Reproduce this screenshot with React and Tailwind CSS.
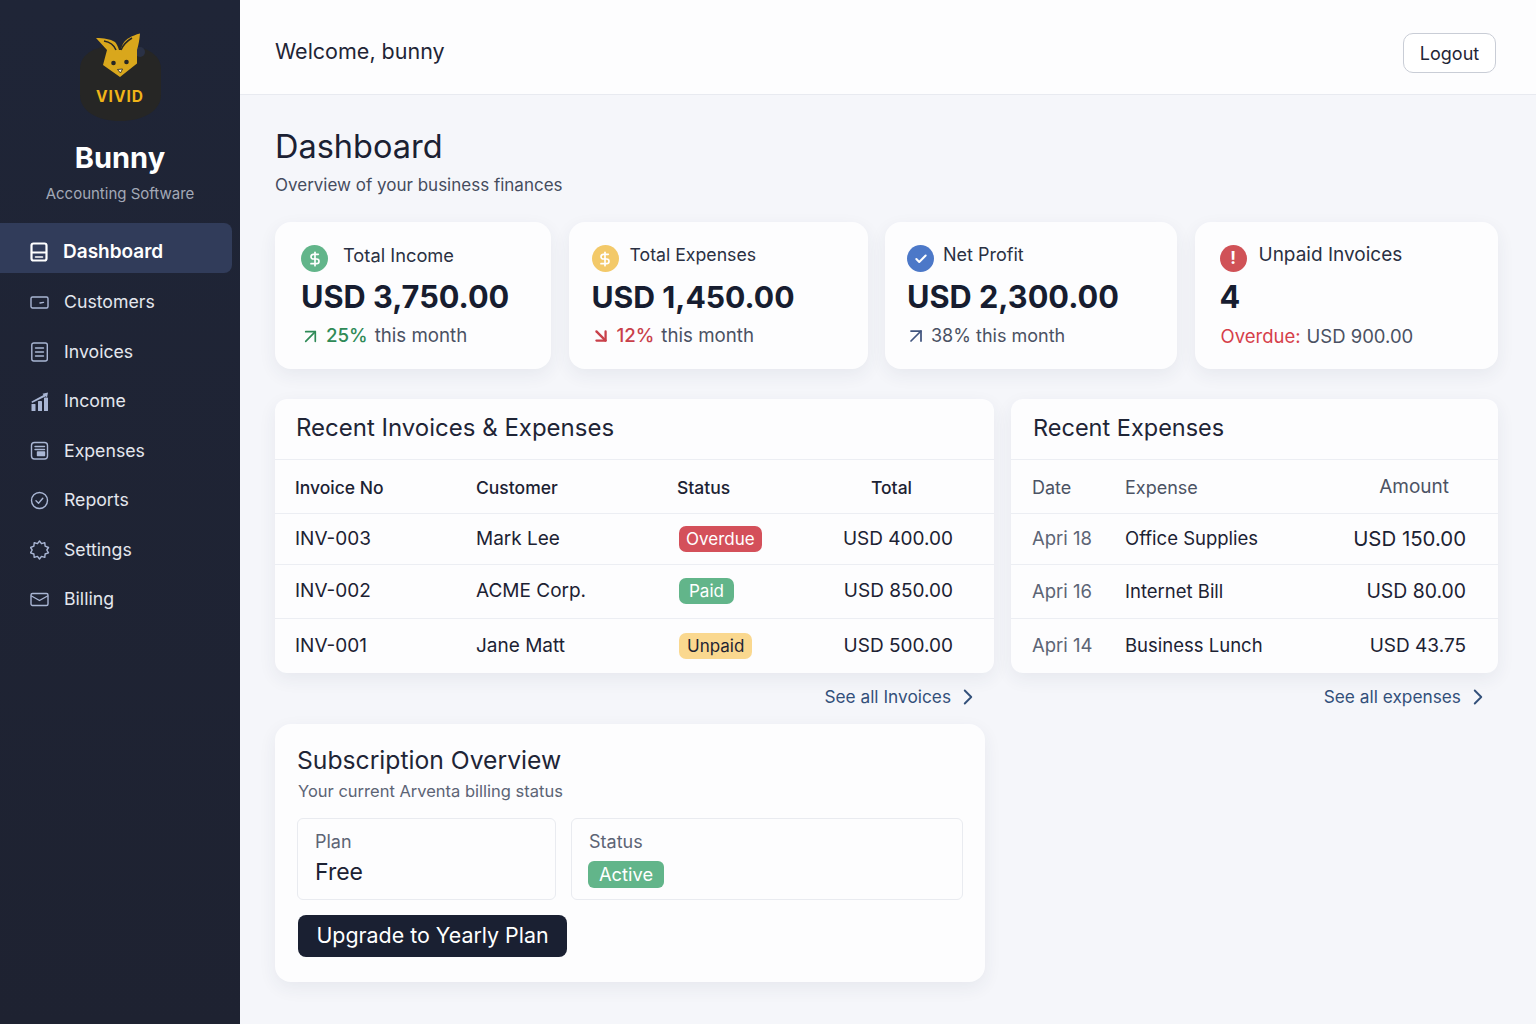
import { ArrowUpRight, ArrowDownRight, ChevronRight, Check, DollarSign } from 'lucide-react';

const NavIcon = ({ name, className }) => {
  const common = { width: 20, height: 20, viewBox: '0 0 20 20', fill: 'none', stroke: 'currentColor', strokeWidth: 1.4, strokeLinecap: 'round', strokeLinejoin: 'round', className };
  if (name === 'dashboard')
    return (
      <svg {...common} strokeWidth={2.2}>
        <rect x="2.500" y="1.500" width="15" height="17" rx="2" />
        <path d="M3 10.500h14" />
        <path d="M6.500 15h7" strokeWidth={1.6} />
      </svg>
    );
  if (name === 'customers')
    return (
      <svg {...common}>
        <rect x="1" y="4" width="17" height="11" rx="1.500" />
        <path d="M10 10l3.500-.6" />
      </svg>
    );
  if (name === 'invoices')
    return (
      <svg {...common}>
        <rect x="1.800" y="1" width="15.500" height="18" rx="2" />
        <path d="M5.500 6h8M5.500 10h8M5.500 14h8" />
      </svg>
    );
  if (name === 'income')
    return (
      <svg {...common} fill="currentColor" stroke="none">
        <rect x="1.500" y="12" width="4" height="7" rx=".6" />
        <rect x="8" y="9" width="4" height="10" rx=".6" />
        <rect x="14" y="5.500" width="4" height="13.500" rx=".6" />
        <path d="M1.500 9.500L13.500 3l-1-1.200L18 .5l-1 5-1.200-1.300L2 11z" />
      </svg>
    );
  if (name === 'expenses')
    return (
      <svg {...common}>
        <rect x="1.500" y="1.500" width="16" height="16.500" rx="3" />
        <path d="M5 5.500h9.500M5 8.500h9.500" />
        <path d="M7.500 11h7v3.500h-7z" fill="currentColor" />
      </svg>
    );
  if (name === 'reports')
    return (
      <svg {...common}>
        <circle cx="9.500" cy="9.500" r="8" />
        <path d="M6 9.800l2.500 2.400 4.300-5" />
      </svg>
    );
  if (name === 'settings')
    return (
      <svg {...common}>
        <path d="M9.500 1l2 2.700 3.300-1 .3 3.400 3.400 1.400-1.700 2.500 1.700 2.800-3.400 1.200-.3 3.400-3.300-1-2 2.600-2-2.600-3.300 1-.3-3.400L.5 12.800l1.700-2.800L.5 7.500 3.900 6.100l.3-3.400 3.300 1z" />
      </svg>
    );
  return (
    <svg {...common}>
      <rect x="1" y="3.500" width="17" height="12" rx="1.500" />
      <path d="M1.500 6l8 4.500 8-4.500" />
    </svg>
  );
};

const nav = [
  ['Customers', 'customers'],
  ['Invoices', 'invoices'],
  ['Income', 'income'],
  ['Expenses', 'expenses'],
  ['Reports', 'reports'],
  ['Settings', 'settings'],
  ['Billing', 'billing'],
];

const Logo = () => (
  <svg width="90" height="92" viewBox="0 0 90 92" className="block">
    <path d="M45 13c23 0 41 8 41 24v26c0 16-18 26-41 26S5 79 5 63V37c0-16 17-24 40-24z" fill="#262625" />
    <circle cx="65" cy="20" r="5" fill="#2a3145" />
    <path d="M21 6c8 0 14 1 19 4 2 2 3 5 4 8h2c1-6 4-10 8-12 3-2 7-3.500 11-4.500-.5 6-1.500 12-3 16.500v13.500L45 45 28 33l4-15z" fill="#d9a71c" />
    <path d="M29 9c6 1 10 4 12 9M57 6c-5 3-9 7-11 12" fill="none" stroke="#262625" strokeWidth="1.500" />
    <circle cx="38.500" cy="31" r="2.300" fill="#262625" />
    <circle cx="51.500" cy="30" r="2.300" fill="#262625" />
    <path d="M42.500 37.500l5-.5-2 4z" fill="#fff3c8" stroke="#262625" strokeWidth=".8" />
    <text x="45" y="70" textAnchor="middle" fontSize="15.500" fontWeight="700" letterSpacing="1" fill="#f0b418" fontFamily="Inter, sans-serif">VIVID</text>
  </svg>
);

const Sidebar = () => (
  <aside className="w-[240px] shrink-0 min-h-[1024px] bg-gradient-to-b from-[#1f2537] to-[#1e2231] text-[#e4e7ee]">
    <div className="flex flex-col items-center pt-[32px]">
      <Logo />
      <div className="mt-[15px] text-[29px] leading-[38px] font-bold text-white">Bunny</div>
      <div className="mt-[6px] text-[15px] leading-[22px] text-[#a3a9b7]">Accounting Software</div>
    </div>
    <nav className="mt-[18px] pr-2">
      <div className="h-[50px] flex items-center pl-[29px] pt-[8px] gap-[14px] rounded-r-lg bg-[#313c5a] text-white font-semibold text-[19px]">
        <NavIcon name="dashboard" />
        Dashboard
      </div>
      <div className="pt-[5px]">
        {nav.map(([label, icon]) => (
          <div key={label} className="h-[49.500px] flex items-center pl-[30px] gap-[14px] text-[17.700px]">
            <NavIcon name={icon} className="text-[#a9b6d4]" />
            {label}
          </div>
        ))}
      </div>
    </nav>
  </aside>
);

const StatIcon = ({ bg, children }) => (
  <span className={`w-[27px] h-[27px] rounded-full flex items-center justify-center text-white shrink-0 mt-[2px] ${bg}`}>{children}</span>
);

const stats = [
  { title: 'Total Income', titleSize: 'text-[18.300px]', value: 'USD 3,750.00', valueSize: 'text-[30.700px]', subSize: 'text-[18.700px]', bg: 'bg-[#62b58a]', gap: 'gap-[15px]', pl: 'pl-[26px]', icon: <DollarSign size={16} strokeWidth={2.5} />,
    sub: <><ArrowUpRight size={23} strokeWidth={1.75} className="text-[#2f8a57] -ml-[2px] mr-[4px]" /><span className="text-[#2f8a57] font-medium mr-[7px]">25%</span>this month</> },
  { title: 'Total Expenses', titleSize: 'text-[17.700px]', value: 'USD 1,450.00', valueSize: 'text-[30.200px]', subSize: 'text-[18.700px]', bg: 'bg-[#f3c969]', gap: 'gap-[11px]', pl: 'pl-[23px]', icon: <DollarSign size={16} strokeWidth={2.5} />,
    sub: <><ArrowDownRight size={22} strokeWidth={2.5} className="text-[#c9404a] -ml-[2px] mr-[5px]" /><span className="text-[#c9404a] font-medium mr-[7px]">12%</span>this month</> },
  { title: 'Net Profit', titleSize: 'text-[18px]', value: 'USD 2,300.00', valueSize: 'text-[30.700px]', subSize: 'text-[18px]', bg: 'bg-[#4c78c8]', gap: 'gap-[9px]', pl: 'pl-[22px]', icon: <Check size={14} strokeWidth={3.5} />,
    sub: <><ArrowUpRight size={24} strokeWidth={1.75} className="text-[#41557f] -ml-[3px] mr-[3px]" />38% this month</> },
  { title: 'Unpaid Invoices', titleSize: 'text-[19px]', value: '4', valueSize: 'text-[30.700px]', subSize: 'text-[18.500px]', bg: 'bg-[#d05257]', gap: 'gap-[12px]', pl: 'pl-[25px]', icon: <span className="font-bold text-[17px] leading-none">!</span>,
    sub: <><span className="ml-[1px] text-[#d6404a] mr-[6px]">Overdue:</span>USD 900.00</> },
];

const StatCard = ({ s }) => (
  <div className={`h-[147px] bg-[#fdfdfe] rounded-2xl shadow-[0_6px_18px_rgba(40,50,90,0.07)] pt-[21px] ${s.pl}`}>
    <div className={`flex items-start ${s.gap} ${s.titleSize} leading-[24px] text-[#2a3042]`}>
      <StatIcon bg={s.bg}>{s.icon}</StatIcon>
      {s.title}
    </div>
    <div className={`mt-[3px] ${s.valueSize} leading-[44px] font-bold text-[#171d30]`}>{s.value}</div>
    <div className={`mt-[4px] flex items-center ${s.subSize} leading-[26px] text-[#4a5163]`}>{s.sub}</div>
  </div>
);

const badgeClass = {
  Overdue: 'bg-[#d4505a] text-white px-[7px]',
  Paid: 'bg-[#62b58a] text-white px-[10px]',
  Unpaid: 'bg-[#fad88f] text-[#1f2433] px-[8px]',
};

const Badge = ({ label }) => (
  <span className={`inline-block ml-[2px] h-[26px] rounded-[7px] text-[17px] leading-[26px] ${badgeClass[label]}`}>{label}</span>
);

const invoices = [
  ['INV-003', 'Mark Lee', 'Overdue', 'USD 400.00', 'h-[51px]'],
  ['INV-002', 'ACME Corp.', 'Paid', 'USD 850.00', 'h-[54px]'],
  ['INV-001', 'Jane Matt', 'Unpaid', 'USD 500.00', 'h-[55px]'],
];

const expenses = [
  ['Apri 18', 'Office Supplies', 'USD 150.00', 'h-[51px]', 'text-[20.400px]'],
  ['Apri 16', 'Internet Bill', 'USD 80.00', 'h-[54px]', 'text-[19.400px]'],
  ['Apri 14', 'Business Lunch', 'USD 43.75', 'h-[55px]', 'text-[19px]'],
];

const InvoicesCard = () => (
  <div className="h-[274px] bg-[#fdfdfe] rounded-xl shadow-[0_6px_18px_rgba(40,50,90,0.07)] overflow-hidden text-[19px] text-[#1c2233]">
    <div className="h-[61px] border-b border-[#eceef3] pl-[21px] pb-[2px] flex items-center text-[24px] text-[#1f2536]">Recent Invoices &amp; Expenses</div>
    <div className="h-[53px] grid grid-cols-[181px_201px_1fr_auto] items-center pl-[20px] pr-[82px] pt-[4px] font-medium text-[17.500px]">
      <span>Invoice No</span><span>Customer</span><span>Status</span><span>Total</span>
    </div>
    {invoices.map(([no, customer, status, total, h]) => (
      <div key={no} className={`${h} grid grid-cols-[181px_201px_1fr_auto] items-center pl-[20px] pr-[41px] border-t border-[#eceef3]`}>
        <span>{no}</span><span>{customer}</span><span><Badge label={status} /></span><span>{total}</span>
      </div>
    ))}
  </div>
);

const ExpensesCard = () => (
  <div className="h-[274px] bg-[#fdfdfe] rounded-xl shadow-[0_6px_18px_rgba(40,50,90,0.07)] overflow-hidden text-[18.500px] text-[#1c2233]">
    <div className="h-[61px] border-b border-[#eceef3] pl-[22px] pb-[2px] flex items-center text-[23.500px] text-[#1f2536]">Recent Expenses</div>
    <div className="h-[53px] grid grid-cols-[93px_1fr_auto] items-center pl-[21px] pr-[49px] pt-[2px] text-[18px] text-[#4c5364]">
      <span>Date</span><span>Expense</span><span className="text-[19px]">Amount</span>
    </div>
    {expenses.map(([date, name, amount, h, size]) => (
      <div key={date} className={`${h} grid grid-cols-[93px_1fr_auto] items-center pl-[21px] pr-[32px] border-t border-[#eceef3]`}>
        <span className="text-[#5c6475]">{date}</span><span>{name}</span><span className={size}>{amount}</span>
      </div>
    ))}
  </div>
);

const SeeAll = ({ label, pr }) => (
  <div className={`h-[51px] flex items-start justify-end pt-[12px] text-[17.300px] leading-[24px] text-[#33507a] ${pr}`}>
    {label}
    <ChevronRight size={26} strokeWidth={1.75} className="ml-[4px] -mt-[1px]" />
  </div>
);

const Subscription = () => (
  <div className="w-[710px] h-[258px] bg-[#fdfdfe] rounded-2xl shadow-[0_6px_18px_rgba(40,50,90,0.07)] px-[22px] pt-[19px]">
    <h2 className="text-[24.700px] leading-[34px] text-[#1f2536]">Subscription Overview</h2>
    <p className="mt-[2px] ml-[1px] text-[16.500px] leading-[24px] text-[#5c6475]">Your current Arventa billing status</p>
    <div className="mt-[15px] grid grid-cols-[259px_1fr] gap-[15px]">
      <div className="h-[82px] border border-[#e9ebf0] rounded-md pl-[17px] pt-[10px]">
        <div className="text-[18px] leading-[26px] text-[#5c6475]">Plan</div>
        <div className="mt-[1px] text-[23px] leading-[32px] text-[#1c2233]">Free</div>
      </div>
      <div className="h-[82px] border border-[#e9ebf0] rounded-md pl-[16px] pt-[10px]">
        <div className="ml-[1px] text-[18px] leading-[26px] text-[#5c6475]">Status</div>
        <span className="inline-block mt-[6px] h-[27px] px-[11px] rounded-md bg-[#62b58a] text-white text-[18.300px] leading-[27px]">Active</span>
      </div>
    </div>
    <button className="mt-[15px] ml-[1px] h-[42px] w-[269px] pb-[2px] rounded-lg bg-[#1a2032] text-white text-[21.400px]">Upgrade to Yearly Plan</button>
  </div>
);

export default function App() {
  return (
    <div className="flex min-h-[1024px] bg-[#f5f6fa] font-['Inter',sans-serif]">
      <Sidebar />
      <div className="flex-1 min-w-0">
        <header className="h-[95px] bg-[#fdfdfe] border-b border-[#e8eaf0] flex items-start justify-between pt-[33px] pl-[35px] pr-[40px]">
          <span className="mt-[3px] text-[21.500px] leading-[30px] text-[#1f2536]">Welcome, bunny</span>
          <button className="h-[40px] w-[93px] rounded-[10px] border border-[#c9cdd6] bg-white text-[18px] text-[#1f2536]">Logout</button>
        </header>
        <main className="pl-[35px] pr-[38px] pt-[30px]">
          <h1 className="text-[32.500px] leading-[44px] text-[#1b2133]">Dashboard</h1>
          <p className="mt-[3px] text-[17px] leading-[26px] text-[#454c5e]">Overview of your business finances</p>
          <div className="mt-[24px] grid grid-cols-[276px_299px_292px_303px] gap-x-[17.500px]">
            {stats.map(s => <StatCard key={s.title} s={s} />)}
          </div>
          <div className="mt-[30px] grid grid-cols-[719px_487px] gap-x-[17px]">
            <div>
              <InvoicesCard />
              <SeeAll label="See all Invoices" pr="pr-[13px]" />
            </div>
            <div>
              <ExpensesCard />
              <SeeAll label="See all expenses" pr="pr-[7px]" />
            </div>
          </div>
          <Subscription />
        </main>
      </div>
    </div>
  );
}
